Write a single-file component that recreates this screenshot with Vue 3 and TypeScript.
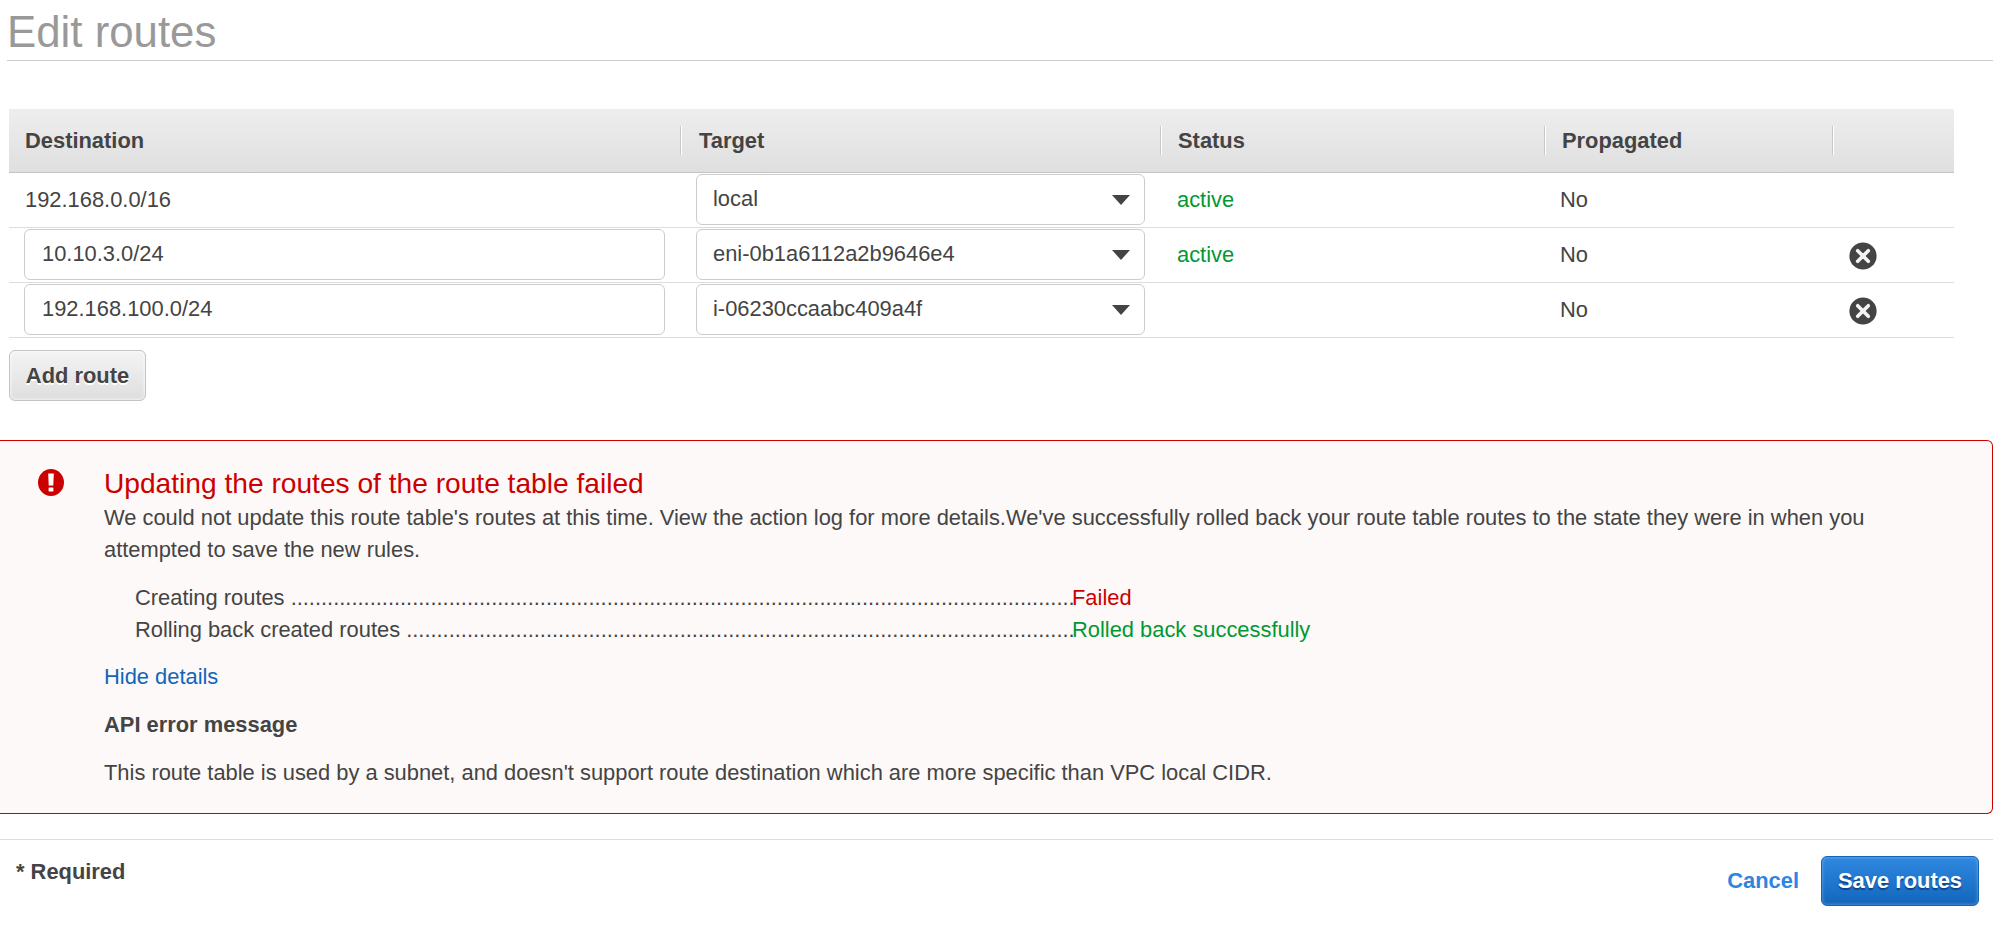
<script setup lang="ts">
import { ref } from 'vue'

interface Route {
  destination: string
  target: string
  status: string
  propagated: string
  editable: boolean
}

const headers: string[] = ['Destination', 'Target', 'Status', 'Propagated', '']

const routes = ref<Route[]>([
  { destination: '192.168.0.0/16', target: 'local', status: 'active', propagated: 'No', editable: false },
  { destination: '10.10.3.0/24', target: 'eni-0b1a6112a2b9646e4', status: 'active', propagated: 'No', editable: true },
  { destination: '192.168.100.0/24', target: 'i-06230ccaabc409a4f', status: '', propagated: 'No', editable: true },
])

// Each label is followed by enough leader dots to reach the result column.
const steps = [
  { label: 'Creating routes', dots: 129, result: 'Failed', ok: false },
  { label: 'Rolling back created routes', dots: 110, result: 'Rolled back successfully', ok: true },
]
</script>

<template>
  <main class="page">
    <h1 class="title">Edit routes</h1>

    <section class="table">
      <div class="row head">
        <div v-for="(h, i) in headers" :key="i" class="th">{{ h }}</div>
      </div>
      <div v-for="(r, i) in routes" :key="i" class="row body">
        <div class="cell dest">
          <input v-if="r.editable" v-model="r.destination" class="field" type="text" />
          <span v-else class="plain">{{ r.destination }}</span>
        </div>
        <div class="cell target">
          <div class="field select">
            <span>{{ r.target }}</span>
            <svg class="arrow" viewBox="0 0 18 10"><path d="M0 0h18L9 10z" fill="#444" /></svg>
          </div>
        </div>
        <div class="cell status">{{ r.status }}</div>
        <div class="cell prop">{{ r.propagated }}</div>
        <div class="cell remove">
          <svg v-if="r.editable" class="x-icon" viewBox="0 0 28 28">
            <circle cx="14" cy="14" r="13.6" fill="#444" />
            <path d="M8.7 8.7l10.6 10.6M19.3 8.7L8.7 19.3" stroke="#f4f4f4" stroke-width="3.6" stroke-linecap="round" />
          </svg>
        </div>
      </div>
    </section>

    <button class="btn add" type="button">Add route</button>

    <section class="alert">
      <svg class="alert-icon" viewBox="0 0 26 27">
        <ellipse cx="13" cy="13.5" rx="13" ry="13.5" fill="#c00" />
        <path d="M10.2 4.4h5.6l-.5 12h-4.6z" fill="#fff" />
        <rect x="10.6" y="18.4" width="4.8" height="4.2" rx=".6" fill="#fff" />
      </svg>
      <div class="alert-body">
        <h2>Updating the routes of the route table failed</h2>
        <p>We could not update this route table's routes at this time. View the action log for more details.We've successfully rolled back your route table routes to the state they were in when you attempted to save the new rules.</p>
        <ul class="steps">
          <li v-for="s in steps" :key="s.label">
            <span class="step">{{ s.label }} {{ '.'.repeat(s.dots) }}</span>
            <span :class="s.ok ? 'ok' : 'bad'">{{ s.result }}</span>
          </li>
        </ul>
        <a class="link">Hide details</a>
        <strong class="api">API error message</strong>
        <p>This route table is used by a subnet, and doesn't support route destination which are more specific than VPC local CIDR.</p>
      </div>
    </section>

    <footer class="footer">
      <strong class="required">* Required</strong>
      <div class="actions">
        <a class="cancel">Cancel</a>
        <button class="btn save" type="button">Save routes</button>
      </div>
    </footer>
  </main>
</template>

<style>
body {
  background: #fff;
  overflow: hidden;
}
</style>

<style scoped>
* {
  box-sizing: border-box;
}
.page {
  width: 1993px;
  height: 927px;
  font: 21.88px/32px "Liberation Sans", Arial, sans-serif;
  color: #444;
}
.title {
  margin: 0 0 48px 7px;
  height: 61px;
  border-bottom: 1px solid #ccc;
  font-size: 43.8px;
  line-height: 64px;
  font-weight: 400;
  color: #999;
}
.table {
  width: 1945px;
  margin-left: 9px;
}
.row {
  display: grid;
  grid-template-columns: 673px 480px 384px 288px 120px;
}
.head {
  height: 64px;
  padding-top: 17px;
  background: linear-gradient(#eee, #dfdfdf);
  border-bottom: 1px solid #c4c4c4;
  font-weight: 700;
}
.th {
  height: 29px;
  padding-left: 16px;
  line-height: 29px;
  border-right: 1px solid #fff;
  box-shadow: inset -1px 0 #c8c8c8;
}
.th:nth-child(2) {
  padding-left: 17px;
}
.th:last-child {
  border: 0;
  box-shadow: none;
}
.body {
  height: 55px;
  border-bottom: 1px solid #ddd;
}
.cell {
  line-height: 53px;
}
.dest {
  padding-left: 15px;
}
.plain {
  padding-left: 1px;
}
.target {
  padding-left: 14px;
}
.status {
  padding-left: 15px;
  color: #093;
}
.prop {
  padding-left: 14px;
}
.remove {
  padding: 14px 0 0 15px;
}
.field {
  display: block;
  width: 641px;
  height: 51px;
  margin-top: 1px;
  padding: 0 17px 1px;
  border: 1px solid #ccc;
  border-radius: 6px;
  background: #fff;
  font: inherit;
  color: inherit;
  line-height: 48px;
  outline: 0;
}
.select {
  display: flex;
  justify-content: space-between;
  width: 449px;
  padding: 0 14px 0 16px;
}
.arrow {
  width: 18px;
  height: 10px;
  margin-top: 20px;
}
.x-icon {
  display: block;
  width: 28px;
  height: 28px;
}
.btn {
  display: block;
  height: 51px;
  padding: 0;
  border-radius: 6px;
  font: inherit;
  font-weight: 700;
  white-space: nowrap;
}
.add {
  width: 137px;
  margin: 12px 0 39px 9px;
  border: 1px solid #c4c4c4;
  background: linear-gradient(#f4f4f4, #dedede);
  box-shadow: inset 0 0 3px 1px rgba(255, 255, 255, .6);
  color: #444;
  text-shadow: 0 2px 0 #fff;
}
.alert {
  display: flex;
  height: 374px;
  border: 1px solid #c00;
  border-left: 0;
  border-radius: 0 6px 6px 0;
  background: #fdf9f8;
}
.alert-icon {
  flex: none;
  width: 26px;
  height: 27px;
  margin: 28px 40px 0 38px;
}
.alert-body {
  width: 1800px;
  padding-top: 26px;
}
h2 {
  margin: 0;
  font-size: 28.15px;
  line-height: 34px;
  font-weight: 400;
  color: #c00;
}
p {
  margin: 0;
}
h2 + p {
  padding-top: 1px;
}
.steps {
  margin: 16px 0 15px;
  padding: 0 0 0 31px;
  list-style: none;
}
.steps li {
  display: flex;
}
.step {
  flex: none;
  width: 937px;
  white-space: nowrap;
}
.ok {
  color: #093;
}
.bad {
  color: #c00;
}
.link {
  display: block;
  color: #1166bb;
}
.api {
  display: block;
  margin: 16px 0;
}
.footer {
  display: flex;
  justify-content: space-between;
  margin-top: 25px;
  border-top: 1px solid #ddd;
}
.required {
  margin: 16px 0 0 16px;
}
.actions {
  display: flex;
  margin: 16px 14px 0 0;
}
.cancel {
  margin: 9px 22px 0 0;
  font-weight: 700;
  color: #2e86e0;
}
.save {
  width: 158px;
  height: 50px;
  border: 1px solid #1464b4;
  background: linear-gradient(#3088e0, #1266bc);
  box-shadow: inset 0 0 3px 1px rgba(255, 255, 255, .22);
  color: #fff;
  text-shadow: 0 2px 1px rgba(0, 40, 100, .6);
}
</style>
